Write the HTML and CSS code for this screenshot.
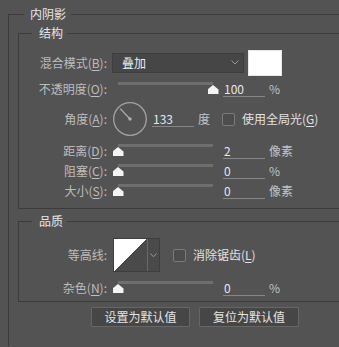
FILE: index.html
```html
<!DOCTYPE html>
<html lang="zh-CN">
<head>
    <meta charset="UTF-8">
    <title>内阴影</title>
    <link rel="stylesheet" href="styles.css">
</head>
<body>
    <fieldset class="group outer">
        <legend>内阴影</legend>

        <!-- 结构 -->
        <fieldset class="group section">
            <legend>结构</legend>

            <div class="row row-blend">
                <span class="lbl">混合模式(<u>B</u>):</span>
                <div class="select">
                    <span>叠加</span>
                    <svg class="chev" width="8" height="5" viewBox="0 0 8 5"><polyline points="0.5,0.5 4,4 7.5,0.5" fill="none" stroke="#9a9a9a" stroke-width="1"/></svg>
                </div>
                <div class="swatch"></div>
            </div>

            <div class="row row-opacity">
                <span class="lbl">不透明度(<u>O</u>):</span>
                <div class="slider"><div class="track"></div><div class="thumb" style="left: 100%"></div></div>
                <span class="field">100</span>
                <span class="unit">%</span>
            </div>

            <div class="row row-angle">
                <span class="lbl">角度(<u>A</u>):</span>
                <svg class="dial" width="34" height="34" viewBox="0 0 34 34">
                    <circle cx="17" cy="17" r="16.3" fill="none" stroke="#a3a3a3" stroke-width="1.3"/>
                    <line x1="17" y1="17" x2="7.2" y2="6.6" stroke="#b0b0b0" stroke-width="1.2"/>
                    <circle cx="17" cy="17" r="1.7" fill="#b0b0b0"/>
                </svg>
                <span class="field field-angle">133</span>
                <span class="unit">度</span>
                <span class="check check-global"></span>
                <span class="check-text">使用全局光(<u>G</u>)</span>
            </div>

            <div class="row row-s row-distance">
                <span class="lbl">距离(<u>D</u>):</span>
                <div class="slider"><div class="track"></div><div class="thumb" style="left: 0%"></div></div>
                <span class="field">2</span>
                <span class="unit">像素</span>
            </div>

            <div class="row row-s">
                <span class="lbl">阻塞(<u>C</u>):</span>
                <div class="slider"><div class="track"></div><div class="thumb" style="left: 0%"></div></div>
                <span class="field">0</span>
                <span class="unit">%</span>
            </div>

            <div class="row row-s">
                <span class="lbl">大小(<u>S</u>):</span>
                <div class="slider"><div class="track"></div><div class="thumb" style="left: 0%"></div></div>
                <span class="field">0</span>
                <span class="unit">像素</span>
            </div>
        </fieldset>

        <!-- 品质 -->
        <fieldset class="group section quality">
            <legend>品质</legend>

            <div class="row row-contour">
                <span class="lbl">等高线:</span>
                <div class="contour">
                    <div class="curve"></div>
                    <div class="drop">
                        <svg width="7" height="5" viewBox="0 0 7 5"><polyline points="0.5,0.5 3.5,3.8 6.5,0.5" fill="none" stroke="#9a9a9a" stroke-width="1"/></svg>
                    </div>
                </div>
                <span class="check check-aa"></span>
                <span class="check-text">消除锯齿(<u>L</u>)</span>
            </div>

            <div class="row row-s row-noise">
                <span class="lbl">杂色(<u>N</u>):</span>
                <div class="slider"><div class="track"></div><div class="thumb" style="left: 0%"></div></div>
                <span class="field">0</span>
                <span class="unit">%</span>
            </div>
        </fieldset>

        <div class="buttons">
            <button class="btn">设置为默认值</button>
            <button class="btn btn-wide">复位为默认值</button>
        </div>
    </fieldset>
</body>
</html>
```

FILE: styles.css
```css
html, body {
    height: 347px;
    overflow: hidden;
}

body {
    margin: 0;
    background-color: #535353;
    color: #bdbdbd;
    font-family: "Noto Sans CJK SC", "Liberation Sans", sans-serif;
    font-size: 12px;
    line-height: 16px;
}

u {
    text-decoration-thickness: 1px;
    text-underline-offset: 2px;
}

/* cadres de groupe */
.group {
    border: 1px solid #3c3c3c;
    border-right: none;
    margin: 0;
    padding: 0;
    min-width: 0;
}

.group legend {
    color: #e6e6e6;
    line-height: 16px;
}

.outer {
    margin: 6px 0 0 8px;
    border-bottom: none;
    padding-bottom: 19px;
}

.outer > legend {
    margin-left: 15px;
    padding: 0 5px 0 6px;
}

.section {
    margin: 3px 0 0 9px;
    padding-bottom: 7px;
}

.section > legend {
    margin-left: 13px;
    padding: 0 4px 0 7px;
}

.quality {
    margin-top: 4px;
    padding-bottom: 3px;
}

/* lignes */
.row {
    display: flex;
    align-items: center;
}

.lbl {
    width: 88px;
    margin-right: 5px;
    text-align: right;
    flex: none;
    white-space: nowrap;
}

.row-blend {
    margin-top: 8px;
    height: 27px;
}

.row-opacity {
    height: 26px;
}

.row-angle {
    height: 34px;
}

.row-s {
    height: 20px;
}

.row-distance {
    margin-top: 5px;
}

.row-contour {
    margin-top: 9px;
    height: 34px;
}

.row-noise {
    margin-top: 6px;
}

/* liste déroulante */
.select {
    box-sizing: border-box;
    width: 132px;
    height: 20px;
    background-color: #464646;
    border: 1px solid #3e3e3e;
    display: flex;
    align-items: center;
    justify-content: space-between;
    padding: 0 4px 0 9px;
    color: #ededed;
}

.swatch {
    width: 34px;
    height: 26px;
    margin-left: 4px;
    background-color: #ffffff;
    box-sizing: border-box;
    border: 1px solid #e8e8e8;
}

/* curseurs */
.slider {
    position: relative;
    width: 95px;
    height: 20px;
    margin: 0 6px 0 6px;
    flex: none;
}

.track {
    margin-top: 3px;
    height: 3px;
    background-color: #6e6e6e;
}

.thumb {
    position: absolute;
    top: 6px;
    width: 11px;
    height: 9px;
    margin-left: -5.5px;
    background-color: #f4f4f4;
    clip-path: polygon(50% 0, 100% 50%, 100% 100%, 0 100%, 0 50%);
}

.field {
    box-sizing: border-box;
    width: 42px;
    line-height: 14px;
    padding-left: 1px;
    margin-left: 4px;
    border-bottom: 1px solid #868686;
    color: #e2e6ee;
    flex: none;
}

.unit {
    margin-left: 4px;
    color: #c0c4c8;
}

/* angle */
.dial {
    margin-left: 1px;
    flex: none;
}

.field-angle {
    margin-left: 5px;
}

.check {
    box-sizing: border-box;
    width: 13px;
    height: 13px;
    border: 1px solid #7a7a7a;
    border-radius: 2px;
    background-color: #4d4d4d;
    flex: none;
}

.check-global {
    margin-left: 12px;
}

.check-text {
    margin-left: 7px;
    color: #e2e2e2;
    white-space: nowrap;
}

/* contour */
.contour {
    display: flex;
    margin-left: 1px;
    height: 34px;
    border: 1px solid #3e3e3e;
    box-sizing: border-box;
}

.curve {
    width: 33px;
    height: 32px;
    background: linear-gradient(to bottom right, #ffffff 50%, #4a4a4a 50%);
}

.drop {
    width: 11px;
    border-left: 1px solid #686868;
    background-color: #4a4a4a;
    display: flex;
    align-items: center;
    justify-content: center;
}

.check-aa {
    margin-left: 13px;
}

/* boutons */
.buttons {
    display: flex;
    gap: 9px;
    margin: 5px 0 0 82px;
}

.btn {
    width: 99px;
    height: 20px;
    padding: 0;
    background-color: #464646;
    border: 1px solid #666666;
    border-radius: 1px;
    color: #e4e4e4;
    font: inherit;
}

.btn-wide {
    width: 100px;
}
```
